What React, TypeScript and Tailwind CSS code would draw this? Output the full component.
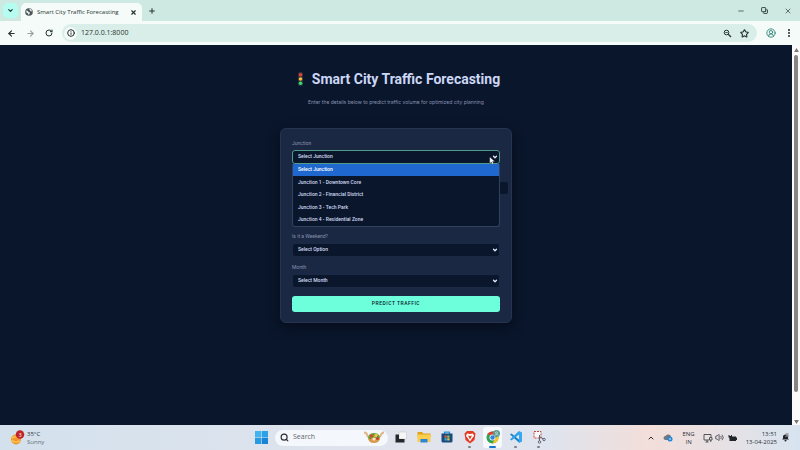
import type { ReactNode } from "react";
import {
  ArrowLeft,
  ArrowRight,
  ChevronDown,
  ChevronUp,
  CircleUserRound,
  Copy,
  EllipsisVertical,
  Info,
  Minus,
  Plus,
  RotateCw,
  Search,
  Star,
  Volume2,
  X,
} from "lucide-react";

const ui = "font-['Open_Sans','Noto_Sans',sans-serif]";

const junctions = [
  "Junction 1 - Downtown Core",
  "Junction 2 - Financial District",
  "Junction 3 - Tech Park",
  "Junction 4 - Residential Zone",
];

function TitleBar() {
  return (
    <header className="flex h-[21px] shrink-0 items-center bg-[#cde9e2] text-[#26322f]">
      <button aria-label="Search tabs" className="ml-[3px] flex h-[15px] w-[15px] items-center justify-center rounded-[5px] bg-[#b5fdf0]">
        <ChevronDown size={7} strokeWidth={4} />
      </button>
      <div className="ml-[3px] flex h-[18px] w-[121px] items-center self-end rounded-t-[5px] bg-[#f4fbf8] pr-[5px] pl-[4px]">
        <svg viewBox="0 0 16 16" className="h-[8px] w-[8px]">
          <circle cx="8" cy="8" r="7.6" fill="#4c5457" />
          <path d="M2 5l4 1 1 2 3 1-1 3-2 2-1-3-3-2zM9 1l4 2 1 4-3-1-2-2z" fill="#e6eeec" />
        </svg>
        <span className="ml-[4px] flex-1 text-[6px] leading-[10px] whitespace-nowrap">Smart City Traffic Forecasting</span>
        <button aria-label="Close tab">
          <X size={7} strokeWidth={4} />
        </button>
      </div>
      <button aria-label="New tab" className="ml-[6px]">
        <Plus size={8} strokeWidth={3} />
      </button>
      <div className="ml-auto flex items-center gap-[16px] pr-[8px]">
        <button aria-label="Minimize"><Minus size={8} strokeWidth={2} /></button>
        <button aria-label="Restore"><Copy size={7} strokeWidth={3} className="-scale-x-100 rotate-90" /></button>
        <button aria-label="Close"><X size={8} strokeWidth={2} /></button>
      </div>
    </header>
  );
}

function Toolbar() {
  return (
    <nav className="flex h-[24px] shrink-0 items-center bg-[#f4fbf8] pr-[6px] pl-[7px] text-[#26322f]">
      <div className="flex items-center gap-[10px]">
        <button aria-label="Back"><ArrowLeft size={9} strokeWidth={3} /></button>
        <button aria-label="Forward" className="text-[#98a19f]"><ArrowRight size={9} strokeWidth={3} /></button>
        <button aria-label="Reload"><RotateCw size={8} strokeWidth={3} /></button>
      </div>
      <div className="ml-[9px] flex h-[18px] flex-1 items-center rounded-full bg-[#d9eee8] pr-[8px] pl-[2px]">
        <span className="flex h-[13px] w-[13px] items-center justify-center rounded-full bg-[#f4fbf8]">
          <Info size={8} strokeWidth={3} />
        </span>
        <input aria-label="Address" defaultValue="127.0.0.1:8000" className="ml-[4px] min-w-0 flex-1 bg-transparent text-[7px] leading-[12px] outline-none" />
        <button aria-label="Zoom">
          <svg viewBox="0 0 18 18" className="h-[9px] w-[9px]" fill="none" stroke="currentColor" strokeWidth="2">
            <circle cx="7" cy="7" r="4.600" />
            <path d="M4.500 7h5" strokeWidth="1.600" />
            <path d="M10.500 10.500l5.500 5.500" strokeWidth="2.400" />
          </svg>
        </button>
        <button aria-label="Bookmark" className="ml-[8px]"><Star size={9} strokeWidth={3} /></button>
      </div>
      <button aria-label="Profile" className="ml-[9px] text-[#2f8778]"><CircleUserRound size={10} strokeWidth={2.2} /></button>
      <button aria-label="Menu" className="ml-[8px]"><EllipsisVertical size={10} strokeWidth={3} /></button>
    </nav>
  );
}

function Field({ id, label, option, active, children }: { id: string; label: string; option: string; active?: boolean; children?: ReactNode }) {
  return (
    <div className="relative flex flex-col gap-[4px]">
      <label htmlFor={id} className="text-[5px] leading-[6px] text-[#8892b0]">{label}</label>
      <div className="grid items-center">
        <select
          id={id}
          className={
            "col-start-1 row-start-1 h-[14px] w-full appearance-none rounded-[3px] border bg-[#0a162b] pr-[10px] pl-[5px] text-[5px] font-medium text-[#d5def5] outline-none " +
            (active ? "border-[#4f9c88]" : "border-[#1b2945]")
          }
        >
          <option>{option}</option>
          {active && junctions.map((name) => <option key={name}>{name}</option>)}
        </select>
        <ChevronDown size={6} strokeWidth={5} className="pointer-events-none col-start-1 row-start-1 mr-[2px] justify-self-end text-[#e6ecfa]" />
      </div>
      {children}
    </div>
  );
}

function JunctionList() {
  return (
    <ul className="absolute top-full left-0 z-10 flex h-[63px] w-full flex-col overflow-hidden rounded-b-[3px] border border-t-0 border-[#33415c] bg-[#0a162b] text-[5px] font-medium text-[#d0daf2]">
      <li className="flex flex-1 items-center bg-[#1e68d0] pl-[5px] text-white">Select Junction</li>
      {junctions.map((name) => (
        <li key={name} className="flex flex-1 items-center pl-[5px]">{name}</li>
      ))}
    </ul>
  );
}

function Pointer() {
  return (
    <svg viewBox="0 0 10 14" className="absolute top-[17px] right-[5px] z-20 h-[8px] w-[6px]">
      <path d="M1 0v11l3-2 2 4 2-1-2-4h4z" fill="#fff" stroke="#222" strokeWidth=".6" />
    </svg>
  );
}

function Page() {
  return (
    <main className="flex min-w-0 flex-1 flex-col items-center bg-[#0a162b] pt-[24px] font-['Roboto',sans-serif]">
      <h1 className="flex items-center text-[14px] leading-[20px] font-bold text-[#ccd6f6]">
        <svg viewBox="0 0 16 16" className="mr-[4px] h-[16px] w-[16px]">
          <rect x="6" y="1" width="5" height="14" rx="1.5" fill="#26313c" />
          <circle cx="8.500" cy="3.8" r="1.8" fill="#ee3b32" />
          <circle cx="8.500" cy="8" r="1.8" fill="#f8bd35" />
          <circle cx="8.500" cy="12.2" r="1.8" fill="#35dc68" />
        </svg>
        Smart City Traffic Forecasting
      </h1>
      <p className="mt-[9px] font-['Inter',sans-serif] text-[5px] leading-[8px] text-[#8892b0]">
        Enter the details below to predict traffic volume for optimized city planning
      </p>
      <form className="mt-[22px] flex w-[232px] flex-col gap-[8px] rounded-[6px] border border-[#26344f] bg-[#1a2843] px-[11px] pt-[11px] pb-[10px] shadow-[0_4px_12px_#050c1c]">
        <div className="flex flex-col gap-[7px]">
          <Field id="junction" label="Junction" option="Select Junction" active>
            <JunctionList />
            <Pointer />
          </Field>
          <div className="flex h-[24px] items-end">
            <input type="text" aria-label="Date and time" className="h-[14px] w-[217px] shrink-0 rounded-[3px] border border-[#1b2945] bg-[#0a162b]" />
          </div>
          <div className="flex h-[24px] items-end">
            <input type="text" aria-label="Hour" className="h-[14px] w-full rounded-[3px] bg-[#0a162b]" />
          </div>
          <Field id="weekend" label="Is it a Weekend?" option="Select Option" />
          <Field id="month" label="Month" option="Select Month" />
        </div>
        <button type="button" className="h-[16px] rounded-[3px] bg-[#6dffdb] text-[5px] font-medium tracking-widest text-[#0a192f] uppercase">
          Predict Traffic
        </button>
      </form>
    </main>
  );
}

function Scrollbar() {
  return (
    <div className="flex w-[8px] shrink-0 flex-col items-center bg-[#fafafa] pt-[3px] pb-px">
      <svg viewBox="0 0 6 5" className="h-[4px] w-[5px] shrink-0"><path d="M3 0l3 5H0z" fill="#777" /></svg>
      <span className="mt-[3px] w-[4px] flex-1 rounded-full bg-[#858585]" />
      <svg viewBox="0 0 6 5" className="mt-[28px] h-[4px] w-[5px] shrink-0"><path d="M3 5l3-5H0z" fill="#777" /></svg>
    </div>
  );
}

function TaskbarApp({ label, active, running, children }: { label: string; active?: boolean; running?: boolean; children: ReactNode }) {
  return (
    <button
      aria-label={label}
      className={"flex h-[21px] w-[19px] flex-col items-center justify-end gap-[2px] rounded-[3px] " + (active ? "bg-[#f6f8fb]" : "")}
    >
      <svg viewBox="0 0 28 28" className="h-[14px] w-[14px]">{children}</svg>
      <span className={"h-[2px] rounded-full " + (active ? "w-[7px] bg-[#1677c9]" : running ? "w-[3px] bg-[#7c8087]" : "w-[3px]")} />
    </button>
  );
}

function Taskbar() {
  return (
    <footer className="grid h-[25px] shrink-0 grid-cols-[1fr_auto_1fr] items-center bg-linear-to-r from-[#d3e1ed] via-[#e2e4ed] via-55% to-[#d7e4f0] text-[#2b3038]">
      <div className="flex items-center pl-[10px]">
        <svg viewBox="0 0 30 32" className="h-[16px] w-[15px]">
          <circle cx="12" cy="19" r="10" fill="#f2962d" />
          <path d="M4 16q8-5 16 0M3 21q8 5 17 1" stroke="#ffc34e" strokeWidth="3" fill="none" />
          <circle cx="20" cy="9" r="8.5" fill="#c02429" />
          <text x="20" y="13" fontSize="11" textAnchor="middle" fill="#fff">3</text>
        </svg>
        <div className="ml-[2px] text-[6px] leading-[8px]">
          <div>35°C</div>
          <div className="text-[#676d76]">Sunny</div>
        </div>
      </div>
      <div className="flex items-center pl-[3px]">
        <button aria-label="Start">
          <svg viewBox="0 0 24 24" className="h-[13px] w-[13px]">
            <path d="M0 0h11.5v11.5H0z" fill="#3fb4ef" />
            <path d="M12.500 0H24v11.500H12.500z" fill="#2ba2e7" />
            <path d="M0 12.500h11.500V24H0z" fill="#279be2" />
            <path d="M12.500 12.500H24V24H12.500z" fill="#1584d6" />
          </svg>
        </button>
        <div className="mr-[3px] ml-[7px] flex h-[16px] w-[113px] items-center rounded-full bg-[#f4f7fb] pr-[3px] pl-[5px]">
          <Search size={9} strokeWidth={3} />
          <input aria-label="Search" placeholder="Search" className="ml-[4px] w-0 min-w-0 flex-1 bg-transparent text-[7px] outline-none placeholder:text-[#62676e]" />
          <svg viewBox="0 0 44 26" className="h-[13px] w-[22px]">
            <path d="M2 3q6 0 7 7l5 5M42 3q-5 0-7 7l-5 5" stroke="#dfb887" strokeWidth="4" fill="none" />
            <ellipse cx="22" cy="13" rx="12" ry="9" fill="#79ae3c" />
            <path d="M10 14h24q-1 10-12 10T10 14z" fill="#d99a4e" />
            <circle cx="17" cy="10" r="3.500" fill="#d84732" />
            <circle cx="26" cy="9" r="3.500" fill="#f1c54b" />
            <circle cx="22" cy="16" r="3" fill="#f7e9ca" />
            <circle cx="29" cy="15" r="3" fill="#cf3d2d" />
            <path d="M12 13l4 3M20 6l3 2M31 10l-3 2" stroke="#2f8a3b" strokeWidth="2" />
          </svg>
        </div>
        <div className="flex gap-[4px]">
          <TaskbarApp label="Task view">
            <path d="M10 4h15v14H10z" fill="#f6f6f6" stroke="#bfc2c6" />
            <path d="M3 9h7v9h11v7H3z" fill="#25272b" />
          </TaskbarApp>
          <TaskbarApp label="File Explorer">
            <path d="M1 4h9l3 3h14v8H1z" fill="#e0a21a" />
            <path d="M1 9h26v15H1z" fill="#fbce4d" />
            <path d="M7 18h14v7H7z" fill="#2a86d8" />
          </TaskbarApp>
          <TaskbarApp label="Microsoft Store">
            <path d="M9 8V4h10v4" fill="none" stroke="#2295d8" strokeWidth="2.500" />
            <path d="M3 7h22v15q0 3-3 3H6q-3 0-3-3z" fill="#174b80" />
            <path d="M9 11h4.500v4.500H9z" fill="#f05a3c" />
            <path d="M14.500 11H19v4.500h-4.500z" fill="#8bc640" />
            <path d="M9 16.500h4.500V21H9z" fill="#31a8e0" />
            <path d="M14.500 16.500H19V21h-4.500z" fill="#f8c234" />
          </TaskbarApp>
          <TaskbarApp label="Brave" running>
            <path d="M8 2h12l5 5-2 13-9 7-9-7L3 7z" fill="#e33a24" />
            <path d="M8 7l6 1 6-1 2 5-4 5-4 6-4-6-4-5z" fill="#fff" />
            <path d="M10 11l4 1 4-1-2 4-2 4-2-4z" fill="#e33a24" />
          </TaskbarApp>
          <TaskbarApp label="Chrome" running active>
            <circle cx="13" cy="15" r="12" fill="#2fa351" />
            <path d="M2.600 9A12 12 0 0 1 24 10H13z" fill="#e33d2e" />
            <path d="M24 10A12 12 0 0 1 13 27l5-9z" fill="#fbc51d" />
            <circle cx="13" cy="15" r="6" fill="#fff" />
            <circle cx="13" cy="15" r="4.500" fill="#347fe4" />
            <circle cx="21" cy="7" r="7" fill="#5b9b90" />
            <circle cx="21" cy="5.500" r="2" fill="none" stroke="#d5eee8" strokeWidth="1.300" />
            <path d="M17 11q4-5 8 0" fill="none" stroke="#d5eee8" strokeWidth="1.300" />
          </TaskbarApp>
          <TaskbarApp label="Visual Studio Code" running>
            <path d="M2 9l3-2 16 13v6z" fill="#1a80c8" />
            <path d="M20 2v7L5 21l-3-2z" fill="#2c9ee6" />
            <path d="M20 2l6 3v18l-6 3z" fill="#35a9ee" />
          </TaskbarApp>
          <TaskbarApp label="Snipping Tool" running>
            <path d="M4 3h14v13H4z" fill="#f6f7f9" stroke="#c6493a" strokeWidth="2" strokeDasharray="4 2" />
            <path d="M14 13l9 5M15 22V10" stroke="#58616c" strokeWidth="2" />
            <circle cx="15" cy="24" r="2.500" fill="none" stroke="#626b76" strokeWidth="2" />
            <circle cx="24" cy="19" r="2.500" fill="none" stroke="#626b76" strokeWidth="2" />
          </TaskbarApp>
        </div>
      </div>
      <div className="flex h-full items-center justify-end bg-linear-to-r from-[#f3deda00] via-[#f3deda] via-40% to-[#d7e4f000] pr-[10px] text-[6px] leading-[8px]">
        <ChevronUp size={8} strokeWidth={3} />
        <svg viewBox="0 0 20 18" className="ml-[8px] h-[9px] w-[10px]">
          <path d="M5 14a4 4 0 0 1 0-8q2-4 6-3 4 0 5 4l-5 7z" fill="#717780" />
          <circle cx="14" cy="12" r="5" fill="#1684da" />
          <path d="M11.500 12h5M14 9.500v5" stroke="#fff" />
        </svg>
        <div className="ml-[9px] text-center"><div>ENG</div><div>IN</div></div>
        <svg viewBox="0 0 20 20" className="ml-[8px] h-[10px] w-[10px]" fill="none" stroke="#30343a" strokeWidth="1.600">
          <path d="M12 14H2V3h14v5M5 18h6M8 14v4" />
          <path d="M13 9h5v5h-5zM15.500 14v4" />
        </svg>
        <Volume2 size={9} strokeWidth={2} className="ml-[2px]" />
        <svg viewBox="0 0 20 16" className="ml-[4px] h-[8px] w-[10px]" fill="#22262b">
          <path d="M3 5h13v2h2v5h-2v2H3z" />
          <path d="M1 2h2v2h3V2h2v5H6v2H3V7H1z" />
        </svg>
        <div className="ml-[8px] text-right"><div>13:51</div><div>13-04-2025</div></div>
        <svg viewBox="0 0 18 18" className="ml-[4px] h-[9px] w-[9px]" fill="#22262b">
          <path d="M2 13l2-2V7q0-4 5-4t5 4v4l2 2z" />
          <path d="M7 14h4q0 3-2 3t-2-3z" />
          <path d="M9 1h7l-4 4h4v2H9l4-4H9z" stroke="#e3e5ec" strokeWidth=".8" />
        </svg>
      </div>
    </footer>
  );
}

export default function App() {
  return (
    <div className={"flex h-screen flex-col overflow-hidden " + ui}>
      <TitleBar />
      <Toolbar />
      <div className="flex min-h-0 flex-1">
        <Page />
        <Scrollbar />
      </div>
      <Taskbar />
    </div>
  );
}
